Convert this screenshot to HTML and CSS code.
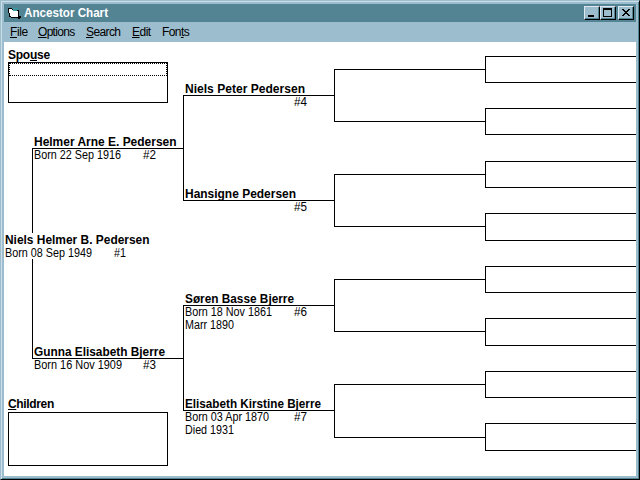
FILE: index.html
```html
<!DOCTYPE html>
<html lang="en">
<head>
<meta charset="utf-8">
<title>Ancestor Chart</title>
<link rel="stylesheet" href="styles.css">
</head>
<body>
<div class="window">
  <header class="titlebar">
    <svg class="app-icon" width="14" height="14" viewBox="0 0 14 14" shape-rendering="crispEdges">
      <path fill="#000" d="M0 1h4v1h1v1h6v6h2v2h-1v1h-2v-1h-7v-1h-2v-4h-1z"/>
      <path fill="#fff" d="M1 2h3v1h1v1h5v6h-7v-1h-1v-3h-1z"/>
      <path fill="#29a5a5" d="M5 1h2v1h-2zM8 1h2v1h-2zM5 3h4v1h-4z"/>
    </svg>
    <svg class="title" width="100" height="18"><text x="0" y="13" textLength="84" lengthAdjust="spacingAndGlyphs">Ancestor Chart</text></svg>
    <div class="controls">
      <button class="control" aria-label="Minimize"><svg width="14" height="12" shape-rendering="crispEdges"><path d="M3 8h6v2H3z"/></svg></button>
      <button class="control" aria-label="Maximize"><svg width="14" height="12" shape-rendering="crispEdges"><path fill-rule="evenodd" d="M2 1h9v9H2zM3 3v6h7V3z"/></svg></button>
      <button class="control close" aria-label="Close"><svg width="14" height="12" shape-rendering="crispEdges"><path d="M3 2h2v1h1v1h2v-1h1v-1h2v1h-1v1h-1v1h-1v1h1v1h1v1h1v1h-2v-1h-1v-1h-2v1h-1v1h-2v-1h1v-1h1v-1h1v-1h-1v-1h-1v-1h-1z"/></svg></button>
    </div>
  </header>
  <nav class="menubar">
    <span class="menu file"><u>F</u>ile</span>
    <span class="menu options"><u>O</u>ptions</span>
    <span class="menu search"><u>S</u>earch</span>
    <span class="menu edit"><u>E</u>dit</span>
    <span class="menu fonts">Fon<u>t</u>s</span>
  </nav>
  <main class="client">
    <aside class="lists">
      <section class="group">
        <h2 class="label spouse">Spo<u>u</u>se</h2>
        <div class="listbox short"><div class="focus-row"></div></div>
      </section>
      <section class="group">
        <h2 class="label children"><u>C</u>hildren</h2>
        <div class="listbox tall"></div>
      </section>
    </aside>
    <svg class="chart" width="632" height="434" viewBox="4 42 632 434">
      <g class="connectors">
        <path d="M183.5 148.5H32.5V233M32.5 259V358.5H183.5"/>
        <path d="M334.5 95.5H183.5V200.5H334.5M334.5 305.5H183.5V410.5H334.5"/>
        <path d="M485.5 69.5H334.5V121.5H485.5M485.5 174.5H334.5V226.5H485.5M485.5 279.5H334.5V331.5H485.5M485.5 384.5H334.5V437.5H485.5"/>
        <path d="M636 56.5H485.5V82.5H636M636 108.5H485.5V134.5H636M636 161.5H485.5V187.5H636M636 213.5H485.5V240.5H636"/>
        <path d="M636 266.5H485.5V292.5H636M636 318.5H485.5V345.5H636M636 371.5H485.5V397.5H636M636 423.5H485.5V450.5H636"/>
      </g>
      <g class="people">
        <text class="name" x="5" y="244" textLength="144.5" lengthAdjust="spacingAndGlyphs">Niels Helmer B. Pedersen</text>
        <text x="5" y="257" textLength="87" lengthAdjust="spacingAndGlyphs">Born 08 Sep 1949</text>
        <text x="114" y="257" textLength="12" lengthAdjust="spacingAndGlyphs">#1</text>

        <text class="name" x="34" y="146" textLength="142.5" lengthAdjust="spacingAndGlyphs">Helmer Arne E. Pedersen</text>
        <text x="34" y="159" textLength="87" lengthAdjust="spacingAndGlyphs">Born 22 Sep 1916</text>
        <text x="143" y="159" textLength="13" lengthAdjust="spacingAndGlyphs">#2</text>

        <text class="name" x="34" y="356" textLength="131" lengthAdjust="spacingAndGlyphs">Gunna Elisabeth Bjerre</text>
        <text x="34" y="369" textLength="88" lengthAdjust="spacingAndGlyphs">Born 16 Nov 1909</text>
        <text x="143" y="369" textLength="13" lengthAdjust="spacingAndGlyphs">#3</text>

        <text class="name" x="185" y="93" textLength="120" lengthAdjust="spacingAndGlyphs">Niels Peter Pedersen</text>
        <text x="294" y="106" textLength="13" lengthAdjust="spacingAndGlyphs">#4</text>

        <text class="name" x="185" y="198" textLength="111" lengthAdjust="spacingAndGlyphs">Hansigne Pedersen</text>
        <text x="294" y="211" textLength="13" lengthAdjust="spacingAndGlyphs">#5</text>

        <text class="name" x="185" y="303" textLength="109" lengthAdjust="spacingAndGlyphs">Søren Basse Bjerre</text>
        <text x="185" y="316" textLength="87" lengthAdjust="spacingAndGlyphs">Born 18 Nov 1861</text>
        <text x="294" y="316" textLength="13" lengthAdjust="spacingAndGlyphs">#6</text>
        <text x="185" y="329" textLength="49" lengthAdjust="spacingAndGlyphs">Marr 1890</text>

        <text class="name" x="185" y="408" textLength="136" lengthAdjust="spacingAndGlyphs">Elisabeth Kirstine Bjerre</text>
        <text x="185" y="421" textLength="84" lengthAdjust="spacingAndGlyphs">Born 03 Apr 1870</text>
        <text x="294" y="421" textLength="13" lengthAdjust="spacingAndGlyphs">#7</text>
        <text x="185" y="434" textLength="49" lengthAdjust="spacingAndGlyphs">Died 1931</text>
      </g>
    </svg>
  </main>
</div>
</body>
</html>
```
FILE: styles.css
```css
* { box-sizing: border-box; }
html, body { margin: 0; width: 640px; height: 480px; overflow: hidden; }
body { font: 12px/13px "Liberation Sans", Arial, sans-serif; color: #000; }

.window {
  width: 640px;
  height: 480px;
  padding: 3px;
  background: #9cbdce;
  border: 1px solid #9cbdce;
  border-right-color: #000;
  border-bottom-color: #000;
  box-shadow: inset 1px 1px #cedee7, inset -1px -1px #528494;
  display: flex;
  flex-direction: column;
}

.titlebar {
  height: 18px;
  flex: none;
  display: flex;
  align-items: flex-start;
  background: #528494;
  padding: 0 2px 0 4px;
}
.app-icon { margin: 3px 2px 0 0; }
.title { fill: #fff; font-size: 12.5px; font-weight: bold; }
.controls { display: flex; margin: 2px 0 0 auto; }
.control {
  width: 16px;
  height: 14px;
  padding: 0;
  background: #9cbdce;
  border: 1px solid;
  border-color: #dee7ef #000 #000 #dee7ef;
  box-shadow: inset -1px -1px #528494;
}
.control svg { display: block; }
.close { margin-left: 2px; }

.menubar {
  height: 20px;
  flex: none;
  display: flex;
  padding: 4px 0 0 6px;
}
.menu { white-space: nowrap; }
.menu.file { width: 28px; letter-spacing: -0.4px; }
.menu.options { width: 48px; letter-spacing: -0.7px; }
.menu.search { width: 46px; letter-spacing: -0.6px; }
.menu.edit { width: 30px; letter-spacing: -0.5px; }
.menu.fonts { letter-spacing: -0.6px; }
u { text-decoration-thickness: 1px; text-underline-offset: 1px; }

.client { flex: 1; display: grid; background: #fff; overflow: hidden; }
.lists, .chart { grid-area: 1 / 1; }
.chart { display: block; font-size: 12.5px; }
.connectors { fill: none; stroke: #000; stroke-width: 1px; shape-rendering: crispEdges; }
.name { font-weight: bold; }

.lists {
  width: 168px;
  padding: 7px 4px 10px;
  display: flex;
  flex-direction: column;
  justify-content: space-between;
}
.label { margin: 0; height: 13px; font-size: 12px; line-height: 13px; font-weight: bold; }
.spouse { letter-spacing: -0.25px; }
.children { letter-spacing: -0.35px; }
.listbox { width: 160px; border: 1px solid #000; }
.short { height: 41px; }
.tall { height: 54px; margin-top: 1px; }
.focus-row { height: 13px; border: 1px dotted #000; }
```
